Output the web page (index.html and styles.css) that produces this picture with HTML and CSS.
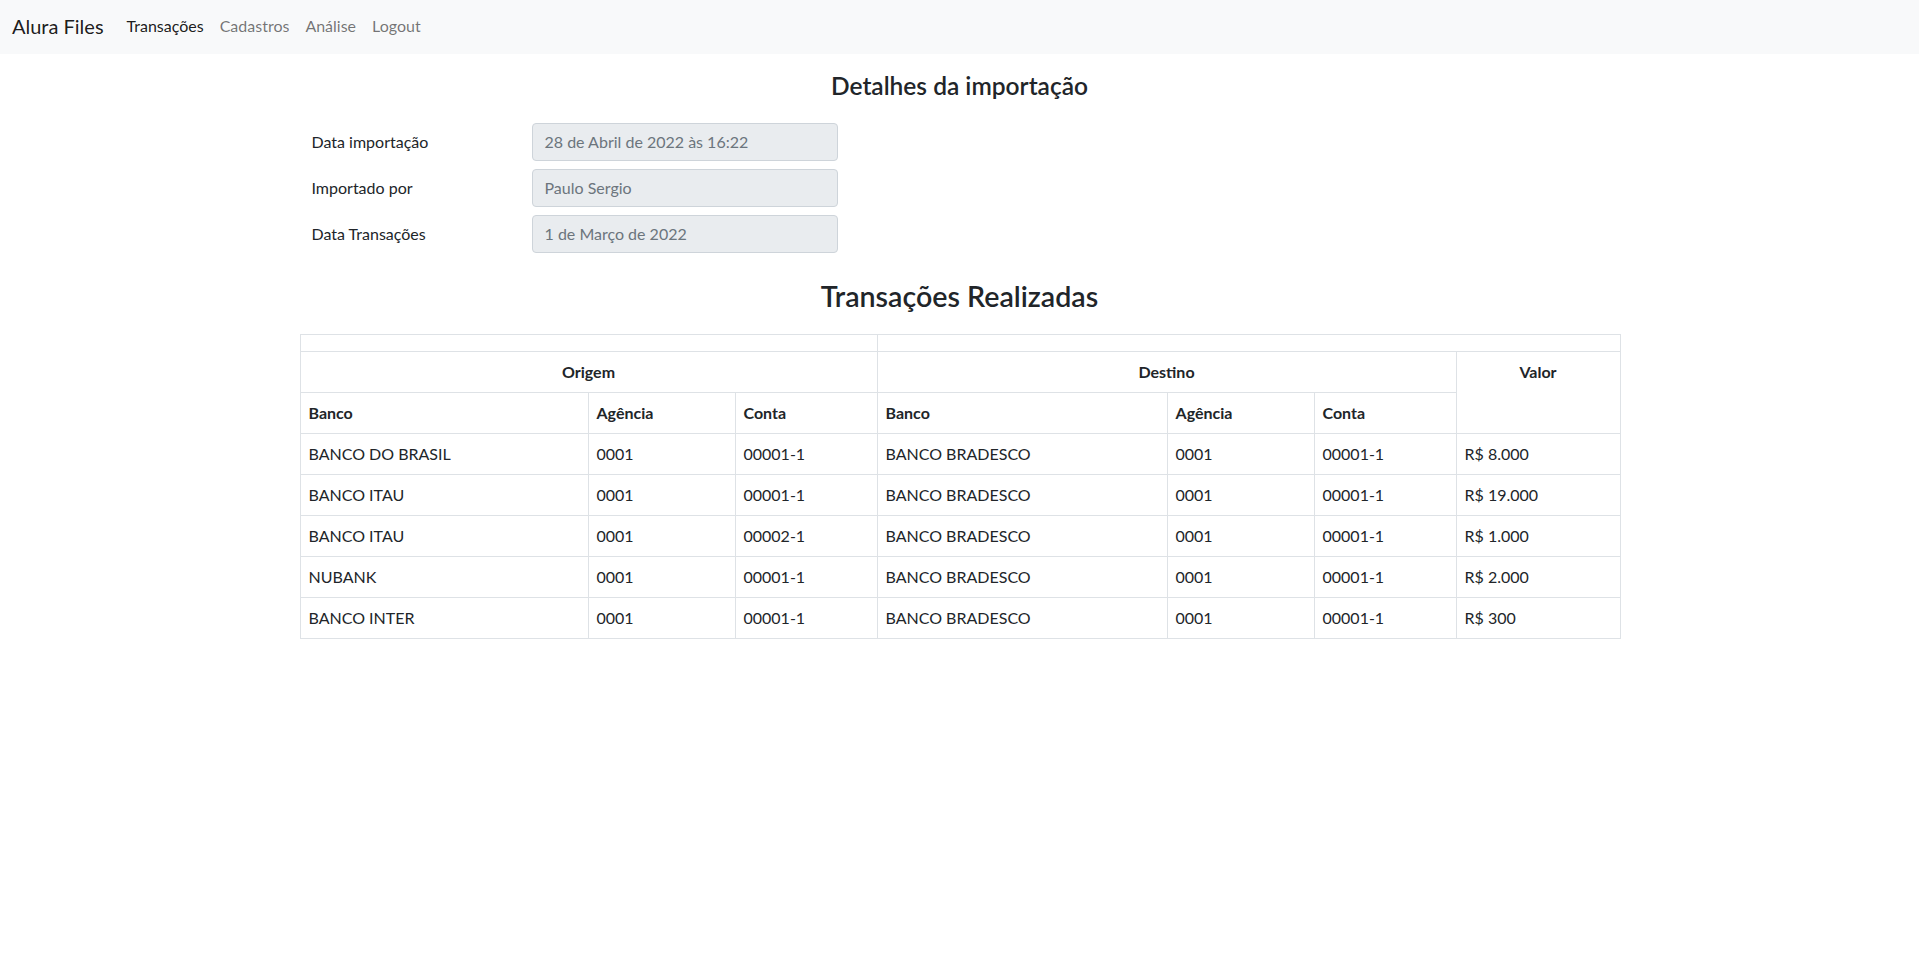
FILE: index.html
```html
<!DOCTYPE html>
<html lang="pt-BR">
<head>
<meta charset="utf-8">
<title>Alura Files</title>
<link rel="stylesheet" href="styles.css">
</head>
<body>
<nav class="navbar">
  <a class="brand" href="#">Alura Files</a>
  <ul class="nav">
    <li><a class="nav-link active" href="#">Transações</a></li>
    <li><a class="nav-link" href="#">Cadastros</a></li>
    <li><a class="nav-link" href="#">Análise</a></li>
    <li><a class="nav-link" href="#">Logout</a></li>
  </ul>
</nav>
<main class="container">
  <h4 class="title-details">Detalhes da importação</h4>
  <div class="form-row">
    <label class="form-label">Data importação</label>
    <div class="form-field"><div class="form-control">28 de Abril de 2022 às 16:22</div></div>
  </div>
  <div class="form-row">
    <label class="form-label">Importado por</label>
    <div class="form-field"><div class="form-control">Paulo Sergio</div></div>
  </div>
  <div class="form-row">
    <label class="form-label">Data Transações</label>
    <div class="form-field"><div class="form-control">1 de Março de 2022</div></div>
  </div>
  <h3 class="title-section">Transações Realizadas</h3>
  <table class="table">
    <colgroup>
      <col class="c-banco"><col class="c-agencia"><col class="c-conta">
      <col class="c-banco2"><col class="c-agencia"><col class="c-conta"><col class="c-valor">
    </colgroup>
    <thead>
      <tr class="empty-row"><th colspan="3"></th><th colspan="4"></th></tr>
      <tr>
        <th colspan="3" class="center">Origem</th>
        <th colspan="3" class="center">Destino</th>
        <th rowspan="2" class="center">Valor</th>
      </tr>
      <tr>
        <th>Banco</th><th>Agência</th><th>Conta</th>
        <th>Banco</th><th>Agência</th><th>Conta</th>
      </tr>
    </thead>
    <tbody>
      <tr><td>BANCO DO BRASIL</td><td>0001</td><td>00001-1</td><td>BANCO BRADESCO</td><td>0001</td><td>00001-1</td><td>R$ 8.000</td></tr>
      <tr><td>BANCO ITAU</td><td>0001</td><td>00001-1</td><td>BANCO BRADESCO</td><td>0001</td><td>00001-1</td><td>R$ 19.000</td></tr>
      <tr><td>BANCO ITAU</td><td>0001</td><td>00002-1</td><td>BANCO BRADESCO</td><td>0001</td><td>00001-1</td><td>R$ 1.000</td></tr>
      <tr><td>NUBANK</td><td>0001</td><td>00001-1</td><td>BANCO BRADESCO</td><td>0001</td><td>00001-1</td><td>R$ 2.000</td></tr>
      <tr><td>BANCO INTER</td><td>0001</td><td>00001-1</td><td>BANCO BRADESCO</td><td>0001</td><td>00001-1</td><td>R$ 300</td></tr>
    </tbody>
  </table>
</main>
</body>
</html>
```

FILE: styles.css
```css
* { box-sizing: border-box; }

body {
  margin: 0;
  font-family: Lato, "Open Sans", "Liberation Sans", sans-serif;
  font-size: 16px;
  line-height: 1.5;
  color: #212529;
  background: #fff;
}

a { text-decoration: none; }

.navbar {
  display: flex;
  align-items: center;
  height: 54px;
  padding: 0 12px;
  background: #f8f9fa;
}

.brand {
  font-size: 20px;
  line-height: 30px;
  color: rgba(0, 0, 0, 0.9);
  margin-right: 15px;
  margin-top: -2px;
}

.nav {
  display: flex;
  list-style: none;
  margin: 0;
  padding: 0;
}

.nav-link {
  display: block;
  padding: 0 8px;
  font-size: 16px;
  line-height: 24px;
  color: rgba(0, 0, 0, 0.55);
  margin-top: -2px;
}

.nav-link.active { color: rgba(0, 0, 0, 0.9); }

.container {
  width: 1320px;
  margin: 0 auto;
}

.title-details {
  margin: 17px 0 23px;
  height: 29px;
  font-size: 24.5px;
  font-weight: 600;
  line-height: 29px;
  text-align: center;
}

.form-row {
  display: flex;
  align-items: center;
  margin-bottom: 8px;
}

.form-label {
  width: 220px;
  padding: 7px 12px;
  line-height: 24px;
}

.form-field {
  width: 330px;
  padding: 0 12px;
}

.form-control {
  height: 38px;
  padding: 6px 12px;
  line-height: 24px;
  color: #6c757d;
  background: #e9ecef;
  border: 1px solid #ced4da;
  border-radius: 4px;
}

.title-section {
  margin: 26px 0 21px;
  height: 34px;
  font-size: 28.6px;
  font-weight: 600;
  line-height: 34px;
  text-align: center;
}

.table {
  width: 1320px;
  border-collapse: collapse;
  table-layout: fixed;
  vertical-align: top;
  border: 1px solid #dee2e6;
}

.c-banco { width: 288px; }
.c-agencia { width: 147px; }
.c-conta { width: 142px; }
.c-banco2 { width: 290px; }
.c-valor { width: 164px; }

.table th,
.table td {
  padding: 8px;
  border: 1px solid #dee2e6;
  text-align: left;
  vertical-align: top;
  line-height: 24px;
}

.table th { font-weight: 700; }

.table th.center { text-align: center; }

.empty-row th { height: 17px; padding: 0; }
```
